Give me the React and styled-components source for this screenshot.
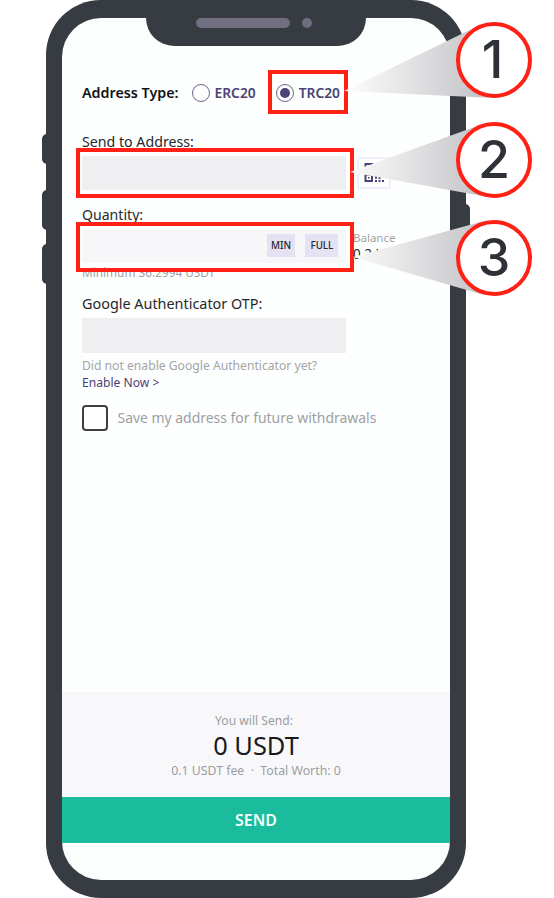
import React from 'react';
import styled, { createGlobalStyle } from 'styled-components';

const FRAME = '#373b42';
const RED = '#ff2115';
const PURPLE = '#4b4277';

const GlobalStyle = createGlobalStyle`
  * { box-sizing: border-box; }
  body { margin: 0; background: #fff; font-family: "Noto Sans", sans-serif; overflow: hidden; }
`;

const Page = styled.main`
  position: relative;
  width: 554px;
  height: 898px;
  padding-left: 46px;
  overflow: hidden;
`;

const Phone = styled.div`
  position: relative;
  width: 420px;
  height: 898px;
  padding: 18px 16px;
  border-radius: 55px;
  background: ${FRAME};
`;

const SideButton = styled.span`
  position: absolute;
  ${({ $side }) => $side}: -4px;
  top: ${({ $top }) => $top}px;
  width: 20px;
  height: ${({ $height }) => $height}px;
  border-radius: 5px;
  background: ${FRAME};
`;

const Screen = styled.div`
  position: relative;
  display: flex;
  flex-direction: column;
  height: 862px;
  border-radius: 39px;
  background: #fdfefe;
  overflow: hidden;
`;

const Notch = styled.div`
  position: absolute;
  left: 100px;
  top: 17px;
  display: flex;
  justify-content: flex-end;
  gap: 12px;
  width: 220px;
  height: 28.5px;
  padding: 1px 54px 0 0;
  border-radius: 0 0 28px 28px;
  background: ${FRAME};
`;

const Speaker = styled.span`
  width: 94px;
  height: 10px;
  border-radius: 5px;
  background: #706e80;
`;

const Camera = styled.span`
  width: 10px;
  height: 10px;
  border-radius: 50%;
  background: #706e80;
`;

const Form = styled.form`
  display: flex;
  flex-direction: column;
  height: 674px;
  padding: 64px 20px 0;
`;

const Text = styled.span`
  flex: none;
  font-size: ${({ $size }) => $size}px;
  font-weight: ${({ $weight }) => $weight || 400};
  line-height: ${({ $line }) => $line || 20}px;
  color: ${({ $color }) => $color || '#26282b'};
  white-space: pre;
`;

const SummaryCaption = styled(Text)`
  padding-right: 4px;
`;

const TypeRow = styled.div`
  display: flex;
  align-items: center;
  height: 22px;
`;

const Option = styled.label`
  display: flex;
  align-items: center;
  gap: 5px;
  margin-left: ${({ $gap }) => $gap}px;
`;

const Radio = styled.span`
  display: grid;
  place-items: center;
  width: 18px;
  height: 18px;
  border: 1.2px solid #6b638f;
  border-radius: 50%;
  &::after {
    content: '';
    width: 10px;
    height: 10px;
    border-radius: 50%;
    background: ${({ $checked }) => ($checked ? PURPLE : 'transparent')};
  }
`;

const Group = styled.div`
  display: flex;
  flex-direction: column;
  margin-top: ${({ $gap }) => $gap}px;
`;

const FieldRow = styled.div`
  display: flex;
  align-items: flex-start;
  height: 34.5px;
  margin-top: ${({ $gap }) => $gap}px;
`;

const Field = styled.div`
  display: flex;
  flex: none;
  align-items: center;
  justify-content: flex-end;
  gap: 10px;
  width: 264.4px;
  height: 34.5px;
  padding-right: 8px;
  background: ${({ $light }) => ($light ? '#f7f7fa' : '#efeff1')};
`;

const AmountButton = styled.button`
  width: ${({ $width }) => $width}px;
  height: 23px;
  padding: 0;
  border: 0;
  background: #e4e2f3;
  color: #24242b;
  font: 500 9.8px/23px "Noto Sans", sans-serif;
`;

const ScanButton = styled.button`
  display: grid;
  place-items: center;
  width: 34px;
  height: 32px;
  margin: 1.5px 0 0 10.6px;
  padding: 0;
  border: 2px solid #f1effc;
  border-radius: 2px;
  background: #fefefe;
`;

const Balance = styled.div`
  display: flex;
  flex-direction: column;
  margin: 1px 0 0 6.6px;
`;

const SaveRow = styled.label`
  display: flex;
  align-items: center;
  gap: 9.5px;
  margin-top: 12.7px;
`;

const Checkbox = styled.span`
  width: 26px;
  height: 26px;
  border: 2px solid #3e4042;
  border-radius: 4px;
  background: #fff;
`;

const Summary = styled.section`
  display: flex;
  flex-direction: column;
  align-items: center;
  height: 105px;
  padding-top: 19px;
  background: #f8f8fb;
`;

const SendButton = styled.button`
  height: 45.5px;
  padding: 1px 0 0;
  border: 0;
  background: #1abc9d;
  color: #f5fffc;
  font: 600 15.9px/44.5px "Noto Sans", sans-serif;
`;

const Highlight = styled.div`
  position: absolute;
  left: ${({ $x }) => $x}px;
  top: ${({ $y }) => $y}px;
  width: ${({ $w }) => $w}px;
  height: ${({ $h }) => $h}px;
  border: 4px solid ${RED};
`;

const Beams = styled.svg`
  position: absolute;
  left: 0;
  top: 0;
`;

const Marker = styled.div`
  position: absolute;
  left: 456px;
  top: ${({ $y }) => $y}px;
  display: grid;
  place-items: center;
  width: 76px;
  height: 76px;
  padding-right: ${({ $nudge }) => $nudge || 0}px;
  border: 4px solid ${RED};
  border-radius: 50%;
  background: #fff;
  color: #2e3238;
  font: 500 52px/68px Inter, sans-serif;
`;

function ScanIcon() {
  return (
    <svg width="20" height="20" viewBox="-0.5 0 20 20" fill={PURPLE}>
      <path fillRule="evenodd" d="M0 0h8.5v8.5H0zm2 2v4.5h4.5V2zM0 10.5h8.5v8.5H0zm2 2v4.5h4.5v-4.5zM11 0h8.5v8.5h-8.5zm2 2v4.5h4.5V2z" />
      <path d="M3.5 14h1.6v1.6H3.5zM10.5 11h2v4.8h-2zM14.5 11h4.5v2h-4.5zM10.5 17h2v2h-2zM14 14h2v2h-2zM14 17h2v2h-2zM17.5 17h2v2h-2z" />
    </svg>
  );
}

export default function App() {
  return (
    <>
      <GlobalStyle />
      <Page>
        <Phone>
          <SideButton $side="left" $top={134} $height={30} />
          <SideButton $side="left" $top={190} $height={40} />
          <SideButton $side="left" $top={244} $height={40} />
          <SideButton $side="right" $top={204} $height={70} />
          <Screen>
            <Form>
              <TypeRow>
                <Text $size={14.3} $weight={600} $color="#111214">Address Type:</Text>
                <Option $gap={13}>
                  <Radio />
                  <Text $size={13.8} $weight={600} $color={PURPLE}>ERC20</Text>
                </Option>
                <Option $gap={20}>
                  <Radio $checked />
                  <Text $size={13.8} $weight={600} $color={PURPLE}>TRC20</Text>
                </Option>
              </TypeRow>
              <Group $gap={27.5}>
                <Text $size={14.2}>Send to Address:</Text>
                <FieldRow $gap={4}>
                  <Field />
                  <ScanButton type="button"><ScanIcon /></ScanButton>
                </FieldRow>
              </Group>
              <Group $gap={15}>
                <Text $size={14.1}>Quantity:</Text>
                <FieldRow $gap={3.5}>
                  <Field $light>
                    <AmountButton type="button" $width={28.5}>MIN</AmountButton>
                    <AmountButton type="button" $width={33}>FULL</AmountButton>
                  </Field>
                  <Balance>
                    <Text $size={11.5} $line={16} $color="#a4a4a7">Balance</Text>
                    <Text $size={13.5} $line={16}>0.2 USDT</Text>
                  </Balance>
                </FieldRow>
                <Text $size={11.8} $line={18} $color="#9fa0a2">Minimum 36.2994 USDT</Text>
              </Group>
              <Group $gap={13}>
                <Text $size={14.4}>Google Authenticator OTP:</Text>
                <FieldRow $gap={4}>
                  <Field />
                </FieldRow>
                <Group $gap={5.8}>
                  <Text $size={12.15} $line={16} $color="#a4a5a7">Did not enable Google Authenticator yet?</Text>
                  <Text $size={12.1} $line={17.6} $color={PURPLE}>Enable Now &gt;</Text>
                </Group>
              </Group>
              <SaveRow>
                <Checkbox />
                <Text $size={13.95} $color="#9e9fa1">Save my address for future withdrawals</Text>
              </SaveRow>
            </Form>
            <Summary>
              <SummaryCaption $size={12.1} $color="#9c9da1">You will Send:</SummaryCaption>
              <Text $size={25.4} $line={28.5} $color="#191a1d">0 USDT</Text>
              <Text $size={12.3} $line={21} $color="#9c9da1">{'0.1 USDT fee  ·  Total Worth: 0'}</Text>
            </Summary>
            <SendButton type="button">SEND</SendButton>
          </Screen>
          <Notch>
            <Speaker />
            <Camera />
          </Notch>
        </Phone>
        <Highlight $x={268} $y={69.5} $w={80} $h={44} />
        <Highlight $x={76} $y={148} $w={278} $h={49.5} />
        <Highlight $x={76} $y={222} $w={278} $h={49.5} />
        <Beams width="554" height="320" viewBox="0 0 554 320">
          <defs>
            <linearGradient id="beam" gradientUnits="userSpaceOnUse" x1="346" y1="0" x2="476" y2="0">
              <stop offset="0" stopColor="#fdfdfd" />
              <stop offset="1" stopColor="#c7c6ca" />
            </linearGradient>
          </defs>
          <path fill="url(#beam)" d="M344 91L478 26L494 60L494 98Z" />
          <path fill="url(#beam)" d="M350 172L480 125L494 160L488 197Z" />
          <path fill="url(#beam)" d="M353 257L484 221L494 258L484 295Z" />
        </Beams>
        <Marker $y={22} $nudge={3}>1</Marker>
        <Marker $y={122}>2</Marker>
        <Marker $y={220}>3</Marker>
      </Page>
    </>
  );
}
